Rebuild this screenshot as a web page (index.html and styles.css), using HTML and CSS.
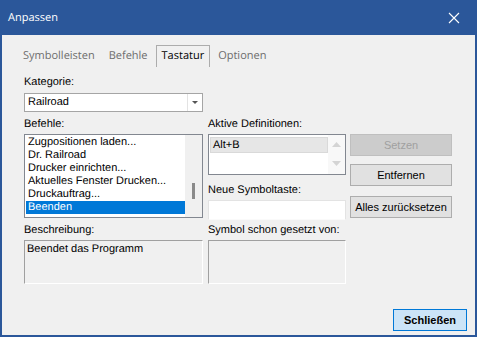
FILE: index.html
```html
<!DOCTYPE html>
<html>

<head>
  <meta charset="UTF-8">
  <title>Anpassen</title>
  <link rel="stylesheet" href="styles.css">
</head>

<body>

  <div class="window">
    <div class="titlebar">
      <span class="title">Anpassen</span>
      <svg class="close" width="12" height="12" viewBox="0 0 12 12">
        <path d="M1 1 L11 11 M11 1 L1 11" stroke="#fff" stroke-width="1.1" fill="none" />
      </svg>
    </div>

    <div class="content">
      <div class="tabs">
        <span class="tab">Symbolleisten</span>
        <span class="tab">Befehle</span>
        <span class="tab active">Tastatur</span>
        <span class="tab">Optionen</span>
      </div>

      <div class="panel">
        <div class="lbl lbl-top">Kategorie:</div>
        <div class="combo">
          <span class="combo-text">Railroad</span>
          <span class="combo-btn">
            <svg width="6" height="3" viewBox="0 0 6 3"><path d="M0 0 H6 L3 3 Z" fill="#555" /></svg>
          </span>
        </div>

        <div class="row row-lists">
          <div class="col col-left">
            <div class="lbl">Befehle:</div>
            <div class="listbox cmd-list">
              <div class="items">
                <div class="item">Zugpositionen laden...</div>
                <div class="item">Dr. Railroad</div>
                <div class="item">Drucker einrichten...</div>
                <div class="item">Aktuelles Fenster Drucken...</div>
                <div class="item">Druckauftrag...</div>
                <div class="item selected">Beenden</div>
              </div>
              <div class="vscroll">
                <div class="thumb"></div>
              </div>
            </div>
          </div>

          <div class="col col-mid">
            <div class="lbl">Aktive Definitionen:</div>
            <div class="listbox def-list">
              <div class="items">
                <div class="item inactive-sel">Alt+B</div>
              </div>
              <div class="vscroll arrows">
                <svg width="9" height="5" viewBox="0 0 9 5"><path d="M0 5 L4.5 0 L9 5 Z" fill="#d4d4d4" /></svg>
                <svg width="9" height="5" viewBox="0 0 9 5"><path d="M0 0 L4.5 5 L9 0 Z" fill="#d4d4d4" /></svg>
              </div>
            </div>
            <div class="lbl lbl-new">Neue Symboltaste:</div>
            <div class="textbox"></div>
          </div>

          <div class="col col-btns">
            <button class="btn btn-set" disabled>Setzen</button>
            <button class="btn btn-del">Entfernen</button>
            <button class="btn">Alles zurücksetzen</button>
          </div>
        </div>

        <div class="row row-info">
          <div class="col col-left">
            <div class="lbl">Beschreibung:</div>
            <div class="infobox">Beendet das Programm</div>
          </div>
          <div class="col col-mid">
            <div class="lbl">Symbol schon gesetzt von:</div>
            <div class="infobox"></div>
          </div>
        </div>
      </div>

      <div class="footer">
        <button class="btn btn-default">Schließen</button>
      </div>
    </div>
  </div>

</body>

</html>
```

FILE: styles.css
```css
body {
  margin: 0;
  padding: 0;
  background-color: #fff;
  font-family: "Liberation Sans", Arial, sans-serif;
  font-size: 11px;
  color: #000;
  text-rendering: geometricPrecision;
}

.window {
  width: 477px;
  height: 337px;
  box-sizing: border-box;
  border: 2px solid #2b579a;
  border-top: 0;
  background-color: #f0f0f0;
  display: flex;
  flex-direction: column;
}

.titlebar {
  height: 35px;
  flex: none;
  background-color: #2b579a;
  display: flex;
  align-items: center;
  justify-content: space-between;
  padding: 0 15px 0 6px;
  color: #fff;
}

.title {
  font-family: "Open Sans", sans-serif;
  font-size: 11px;
}

.content {
  flex: 1;
  display: flex;
  flex-direction: column;
}

/* tab strip */
.tabs {
  display: flex;
  padding: 10px 0 0 15px;
  height: 22px;
}

.tab {
  font-family: "Open Sans", sans-serif;
  font-size: 11px;
  line-height: 20px;
  color: #6d6d6d;
  padding: 0 5px;
  margin-right: 2px;
  border: 1px solid transparent;
  border-bottom: 0;
}

.tab.active {
  color: #000;
  border-color: #acacac;
  background-color: #f0f0f0;
}

.panel {
  padding-left: 22px;
}

.lbl {
  line-height: 13px;
  height: 13px;
  white-space: nowrap;
}

.lbl-top {
  margin-top: 9px;
}

/* combo box */
.combo {
  width: 179px;
  height: 19px;
  box-sizing: border-box;
  margin-top: 4px;
  border: 1px solid #a5a5a5;
  background-color: #fff;
  display: flex;
}

.combo-text {
  flex: 1;
  line-height: 17px;
  padding-left: 3px;
}

.combo-btn {
  width: 14px;
  border-left: 1px solid #e3e3e3;
  display: flex;
  align-items: center;
  justify-content: center;
}

.row {
  display: flex;
}

.col {
  display: flex;
  flex-direction: column;
}

.col-left {
  width: 179px;
  margin-right: 5px;
}

.col-mid {
  width: 138px;
  margin-right: 4px;
}

.col-btns {
  width: 102px;
  padding-top: 16px;
}

.row-lists {
  margin-top: 6px;
}

.row-lists .lbl {
  margin-bottom: 3px;
}

/* list boxes */
.listbox {
  box-sizing: border-box;
  border: 1px solid #828790;
  background-color: #fff;
  display: flex;
}

.cmd-list {
  height: 84px;
}

.def-list {
  height: 41px;
}

.items {
  flex: 1;
  padding-top: 1px;
  padding-left: 1px;
}

.item {
  height: 13px;
  line-height: 13px;
  padding-left: 2px;
  white-space: nowrap;
}

.item.selected {
  background-color: #0078d7;
  color: #fff;
}

.item.inactive-sel {
  background-color: #e6e6e6;
  border: 1px solid #d9d9d9;
  height: 14px;
  line-height: 14px;
  margin-top: 1px;
}

.vscroll {
  width: 17px;
  background-color: #f0f0f0;
  position: relative;
}

.thumb {
  position: absolute;
  left: 7px;
  top: 48px;
  width: 3px;
  height: 16px;
  background-color: #8a8a8a;
}

.vscroll.arrows {
  background-color: #f8f8f8;
  display: flex;
  flex-direction: column;
  align-items: center;
  justify-content: space-between;
  padding: 7px 0 8px;
}

.lbl-new {
  margin-top: 9px;
}

.textbox {
  height: 20px;
  box-sizing: border-box;
  border: 1px solid #e3e3e3;
  border-bottom-color: #fafafa;
  background-color: #fff;
}

/* buttons */
.btn {
  font-family: "Liberation Sans", Arial, sans-serif;
  font-size: 11px;
  height: 22px;
  margin: 0;
  padding: 0;
  box-sizing: border-box;
  border: 1px solid #adadad;
  background-color: #e1e1e1;
  color: #000;
  white-space: nowrap;
  overflow: hidden;
}

.btn-set {
  margin-bottom: 8px;
}

.btn-del {
  margin-bottom: 10px;
}

.btn:disabled {
  border-color: #bfbfbf;
  background-color: #cccccc;
  color: #a0a0a0;
}

.row-info {
  margin-top: 4px;
}

.row-info .lbl {
  margin-bottom: 3px;
}

.infobox {
  height: 44px;
  box-sizing: border-box;
  border: 1px solid #a0a0a0;
  border-right-color: #fff;
  border-bottom-color: #fff;
  padding: 2px 2px;
  line-height: 13px;
}

.footer {
  display: flex;
  justify-content: flex-end;
  padding: 25px 8px 0 0;
}

.btn-default {
  width: 74px;
  font-weight: bold;
  border-color: #0078d7;
  background-color: #cce4f7;
}
```
